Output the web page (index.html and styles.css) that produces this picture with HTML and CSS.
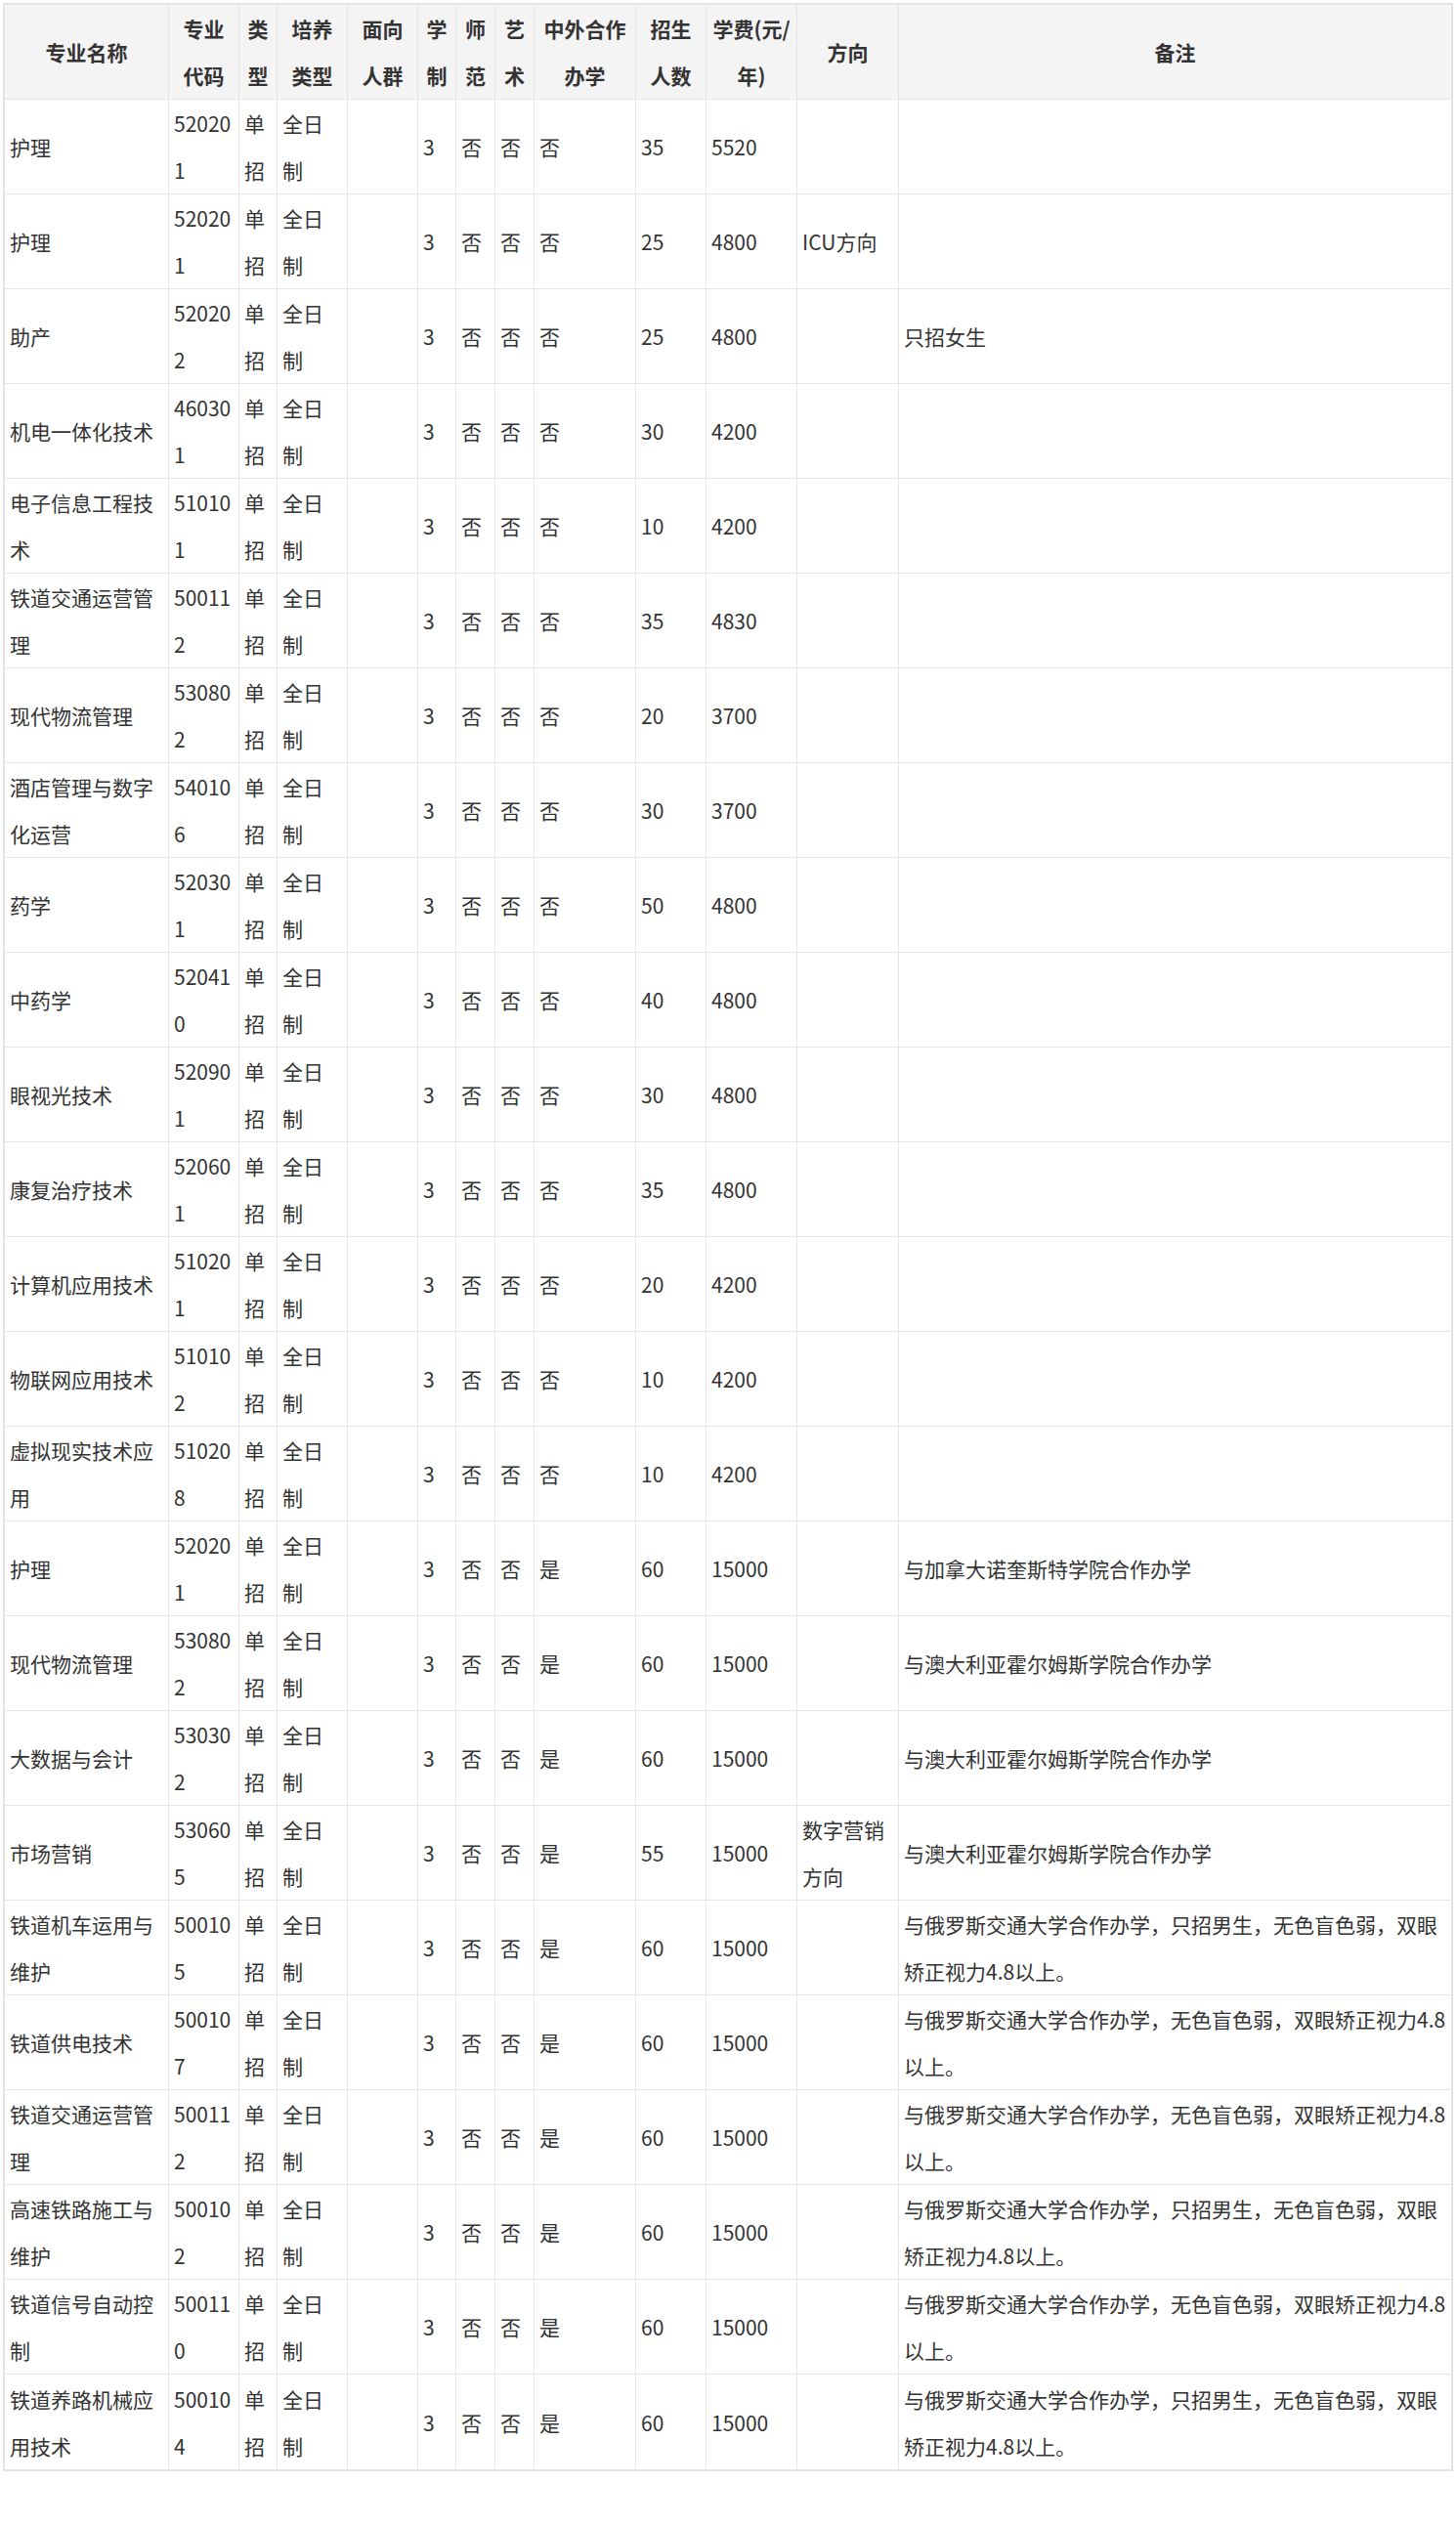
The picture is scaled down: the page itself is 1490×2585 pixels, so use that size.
FILE: index.html
```html
<!DOCTYPE html>
<html lang="zh-CN">
<head>
<meta charset="utf-8">
<title>招生专业</title>
<link rel="stylesheet" href="styles.css">
</head>
<body>
<table class="plan">
  <thead>
    <tr>
      <th class="c1">专业名称</th>
      <th class="c2">专业代码</th>
      <th class="c3">类型</th>
      <th class="c4">培养类型</th>
      <th class="c5">面向人群</th>
      <th class="c6">学制</th>
      <th class="c7">师范</th>
      <th class="c8">艺术</th>
      <th class="c9">中外合作办学</th>
      <th class="c10">招生人数</th>
      <th class="c11">学费(元/年)</th>
      <th class="c12">方向</th>
      <th class="c13">备注</th>
    </tr>
  </thead>
  <tbody>
    <tr><td>护理</td><td>520201</td><td>单招</td><td>全日制</td><td></td><td>3</td><td>否</td><td>否</td><td>否</td><td>35</td><td>5520</td><td></td><td class="note"></td></tr>
    <tr><td>护理</td><td>520201</td><td>单招</td><td>全日制</td><td></td><td>3</td><td>否</td><td>否</td><td>否</td><td>25</td><td>4800</td><td>ICU方向</td><td class="note"></td></tr>
    <tr><td>助产</td><td>520202</td><td>单招</td><td>全日制</td><td></td><td>3</td><td>否</td><td>否</td><td>否</td><td>25</td><td>4800</td><td></td><td class="note">只招女生</td></tr>
    <tr><td>机电一体化技术</td><td>460301</td><td>单招</td><td>全日制</td><td></td><td>3</td><td>否</td><td>否</td><td>否</td><td>30</td><td>4200</td><td></td><td class="note"></td></tr>
    <tr><td>电子信息工程技术</td><td>510101</td><td>单招</td><td>全日制</td><td></td><td>3</td><td>否</td><td>否</td><td>否</td><td>10</td><td>4200</td><td></td><td class="note"></td></tr>
    <tr><td>铁道交通运营管理</td><td>500112</td><td>单招</td><td>全日制</td><td></td><td>3</td><td>否</td><td>否</td><td>否</td><td>35</td><td>4830</td><td></td><td class="note"></td></tr>
    <tr><td>现代物流管理</td><td>530802</td><td>单招</td><td>全日制</td><td></td><td>3</td><td>否</td><td>否</td><td>否</td><td>20</td><td>3700</td><td></td><td class="note"></td></tr>
    <tr><td>酒店管理与数字化运营</td><td>540106</td><td>单招</td><td>全日制</td><td></td><td>3</td><td>否</td><td>否</td><td>否</td><td>30</td><td>3700</td><td></td><td class="note"></td></tr>
    <tr><td>药学</td><td>520301</td><td>单招</td><td>全日制</td><td></td><td>3</td><td>否</td><td>否</td><td>否</td><td>50</td><td>4800</td><td></td><td class="note"></td></tr>
    <tr><td>中药学</td><td>520410</td><td>单招</td><td>全日制</td><td></td><td>3</td><td>否</td><td>否</td><td>否</td><td>40</td><td>4800</td><td></td><td class="note"></td></tr>
    <tr><td>眼视光技术</td><td>520901</td><td>单招</td><td>全日制</td><td></td><td>3</td><td>否</td><td>否</td><td>否</td><td>30</td><td>4800</td><td></td><td class="note"></td></tr>
    <tr><td>康复治疗技术</td><td>520601</td><td>单招</td><td>全日制</td><td></td><td>3</td><td>否</td><td>否</td><td>否</td><td>35</td><td>4800</td><td></td><td class="note"></td></tr>
    <tr><td>计算机应用技术</td><td>510201</td><td>单招</td><td>全日制</td><td></td><td>3</td><td>否</td><td>否</td><td>否</td><td>20</td><td>4200</td><td></td><td class="note"></td></tr>
    <tr><td>物联网应用技术</td><td>510102</td><td>单招</td><td>全日制</td><td></td><td>3</td><td>否</td><td>否</td><td>否</td><td>10</td><td>4200</td><td></td><td class="note"></td></tr>
    <tr><td>虚拟现实技术应用</td><td>510208</td><td>单招</td><td>全日制</td><td></td><td>3</td><td>否</td><td>否</td><td>否</td><td>10</td><td>4200</td><td></td><td class="note"></td></tr>
    <tr><td>护理</td><td>520201</td><td>单招</td><td>全日制</td><td></td><td>3</td><td>否</td><td>否</td><td>是</td><td>60</td><td>15000</td><td></td><td class="note">与加拿大诺奎斯特学院合作办学</td></tr>
    <tr><td>现代物流管理</td><td>530802</td><td>单招</td><td>全日制</td><td></td><td>3</td><td>否</td><td>否</td><td>是</td><td>60</td><td>15000</td><td></td><td class="note">与澳大利亚霍尔姆斯学院合作办学</td></tr>
    <tr><td>大数据与会计</td><td>530302</td><td>单招</td><td>全日制</td><td></td><td>3</td><td>否</td><td>否</td><td>是</td><td>60</td><td>15000</td><td></td><td class="note">与澳大利亚霍尔姆斯学院合作办学</td></tr>
    <tr><td>市场营销</td><td>530605</td><td>单招</td><td>全日制</td><td></td><td>3</td><td>否</td><td>否</td><td>是</td><td>55</td><td>15000</td><td>数字营销方向</td><td class="note">与澳大利亚霍尔姆斯学院合作办学</td></tr>
    <tr><td>铁道机车运用与维护</td><td>500105</td><td>单招</td><td>全日制</td><td></td><td>3</td><td>否</td><td>否</td><td>是</td><td>60</td><td>15000</td><td></td><td class="note">与俄罗斯交通大学合作办学，只招男生，无色盲色弱，双眼矫正视力4.8以上。</td></tr>
    <tr><td>铁道供电技术</td><td>500107</td><td>单招</td><td>全日制</td><td></td><td>3</td><td>否</td><td>否</td><td>是</td><td>60</td><td>15000</td><td></td><td class="note">与俄罗斯交通大学合作办学，无色盲色弱，双眼矫正视力4.8以上。</td></tr>
    <tr><td>铁道交通运营管理</td><td>500112</td><td>单招</td><td>全日制</td><td></td><td>3</td><td>否</td><td>否</td><td>是</td><td>60</td><td>15000</td><td></td><td class="note">与俄罗斯交通大学合作办学，无色盲色弱，双眼矫正视力4.8以上。</td></tr>
    <tr><td>高速铁路施工与维护</td><td>500102</td><td>单招</td><td>全日制</td><td></td><td>3</td><td>否</td><td>否</td><td>是</td><td>60</td><td>15000</td><td></td><td class="note">与俄罗斯交通大学合作办学，只招男生，无色盲色弱，双眼矫正视力4.8以上。</td></tr>
    <tr><td>铁道信号自动控制</td><td>500110</td><td>单招</td><td>全日制</td><td></td><td>3</td><td>否</td><td>否</td><td>是</td><td>60</td><td>15000</td><td></td><td class="note">与俄罗斯交通大学合作办学，无色盲色弱，双眼矫正视力4.8以上。</td></tr>
    <tr><td>铁道养路机械应用技术</td><td>500104</td><td>单招</td><td>全日制</td><td></td><td>3</td><td>否</td><td>否</td><td>是</td><td>60</td><td>15000</td><td></td><td class="note">与俄罗斯交通大学合作办学，只招男生，无色盲色弱，双眼矫正视力4.8以上。</td></tr>
  </tbody>
</table>
</body>
</html>
```

FILE: styles.css
```css
html, body {
  margin: 0;
  padding: 0;
  background: #ffffff;
}

body {
  font-family: "Noto Sans CJK SC", "Noto Sans", sans-serif;
  font-size: 21px;
  color: #333333;
}

.plan {
  margin: 3px;
  width: 1484px;
  box-sizing: border-box;
  table-layout: fixed;
  border-collapse: separate;
  border-spacing: 0;
  border: 2px solid #e3e3e3;
}

.plan th,
.plan td {
  box-sizing: border-box;
  padding: 0 5px;
  line-height: 48px;
  height: 97px;
  vertical-align: middle;
  text-align: left;
  border-right: 1px solid #e6e6e6;
  border-bottom: 1px solid #e6e6e6;
  word-break: break-all;
  overflow-wrap: anywhere;
}

.plan th:last-child,
.plan td:last-child {
  border-right: 0;
}

.plan tbody tr:last-child td {
  border-bottom: 0;
}

.plan th {
  background: #f4f4f4;
  font-weight: 700;
  text-align: center;
  color: #333333;
}

.plan td.note {
  word-break: normal;
  overflow-wrap: normal;
  padding: 0 3px 0 5px;
}

.c1 { width: 168px; }
.c2 { width: 72px; }
.c3 { width: 39px; }
.c4 { width: 72px; }
.c5 { width: 72px; }
.c6 { width: 39px; }
.c7 { width: 40px; }
.c8 { width: 40px; }
.c9 { width: 104px; }
.c10 { width: 72px; }
.c11 { width: 93px; }
.c12 { width: 104px; }
.c13 { width: 565px; }
```
